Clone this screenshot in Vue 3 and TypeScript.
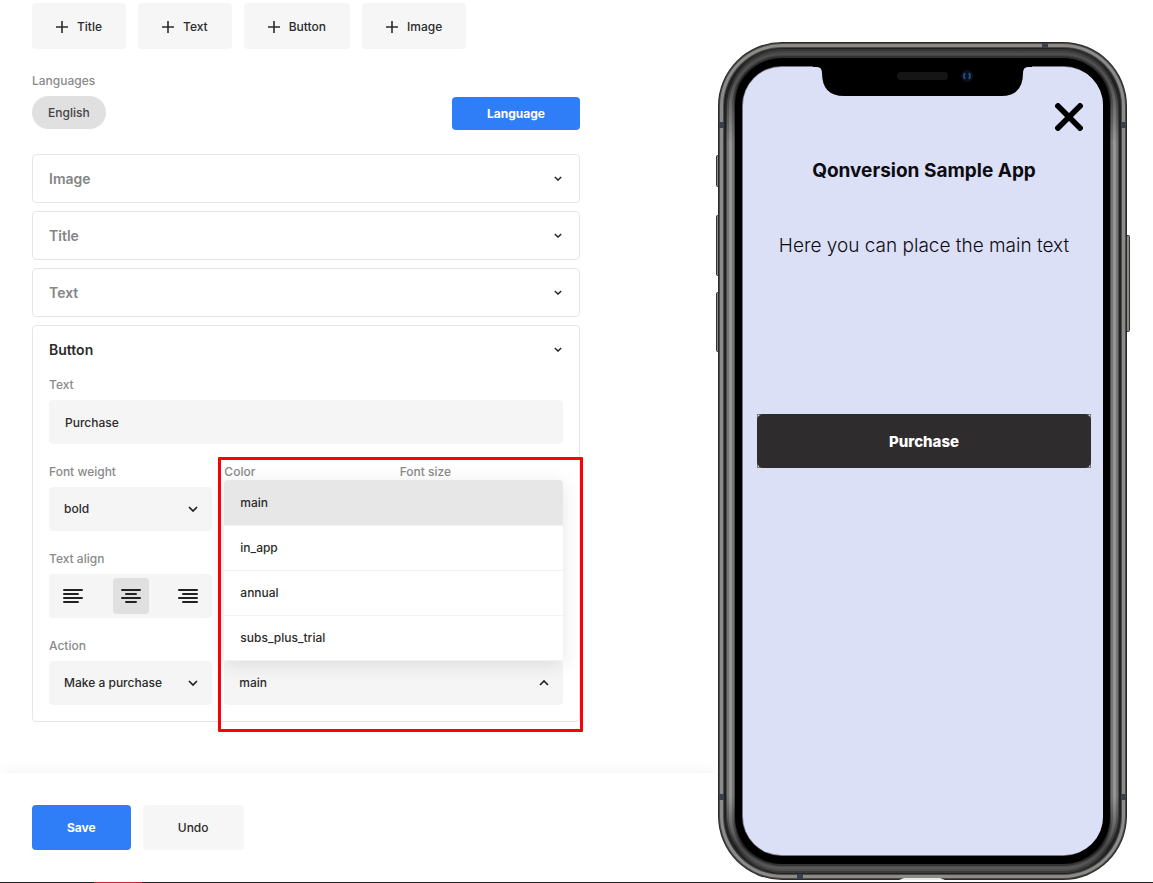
<script setup lang="ts">
import { ref } from 'vue'

const blocks = ['Title', 'Text', 'Button', 'Image']
const collapsed = ['Image', 'Title', 'Text']
const products = ['main', 'in_app', 'annual', 'subs_plus_trial']

const product = ref('main')
const buttonText = ref('Purchase')
const fontWeight = ref('bold')
const action = ref('Make a purchase')
const align = ref('center')

const alignments = [
  { name: 'left', path: 'M1 1h18M1 5h14M1 9h18M1 13h14' },
  { name: 'center', path: 'M1 1h18M5 5h10M1 9h18M5 13h10' },
  { name: 'right', path: 'M1 1h18M5 5h14M1 9h18M5 13h14' },
]

// Nested outlines of the handset frame: side inset, top inset, corner radius, fill.
const frame = [
  { x: 0, y: 0, r: 64, fill: '#2a2a2a' },
  { x: 1, y: 1, r: 63, fill: '#4b4a49' },
  { x: 2, y: 2, r: 62, fill: '#8d8b89' },
  { x: 5, y: 5, r: 59, fill: '#4a4a49' },
  { x: 6, y: 6, r: 58, fill: '#222' },
  { x: 8, y: 7, r: 56, fill: 'url(#bezel-dark)' },
  { x: 9, y: 9, r: 55, fill: 'url(#bezel-mid)' },
  { x: 11, y: 11, r: 53, fill: 'url(#bezel-light)' },
  { x: 14, y: 13, r: 50, fill: 'url(#bezel-mid)' },
  { x: 16, y: 14, r: 48, fill: 'url(#bezel-dark)' },
  { x: 17, y: 16, r: 47, fill: '#000' },
  { x: 24, y: 24, r: 40, fill: '#77777f' },
]
</script>

<template>
  <div class="page">
    <main class="editor">
      <div class="content">
        <div class="adders">
          <button v-for="b in blocks" :key="b" type="button" class="btn add">
            <svg width="12" height="12" viewBox="0 0 12 12"><path d="M6 0v12M0 6h12" /></svg>
            {{ b }}
          </button>
        </div>

        <p class="caption">Languages</p>
        <div class="languages">
          <button type="button" class="pill">English</button>
          <button type="button" class="btn primary language">Language</button>
        </div>

        <div class="cards">
          <section v-for="c in collapsed" :key="c" class="card">
            <button type="button" class="card-head">
              {{ c }}
              <svg class="chevron small" viewBox="0 0 10 6"><path d="M1 1l4 4 4-4" /></svg>
            </button>
          </section>

          <section class="card open">
            <button type="button" class="card-head">
              Button
              <svg class="chevron small" viewBox="0 0 10 6"><path d="M1 1l4 4 4-4" /></svg>
            </button>
            <div class="fields">
              <div class="field full">
                <label for="text">Text</label>
                <input id="text" v-model="buttonText" class="control" type="text" />
              </div>
              <div class="field">
                <label for="weight">Font weight</label>
                <div class="select">
                  <select id="weight" v-model="fontWeight" class="control"><option>bold</option></select>
                  <svg class="chevron" viewBox="0 0 10 6"><path d="M1 1l4 4 4-4" /></svg>
                </div>
              </div>
              <div class="field">
                <label for="color">Color</label>
                <input id="color" class="control" type="text" />
              </div>
              <div class="field">
                <label for="size">Font size</label>
                <input id="size" class="control" type="text" />
              </div>
              <div class="field first">
                <span class="label">Text align</span>
                <div class="aligns">
                  <button
                    v-for="a in alignments"
                    :key="a.name"
                    type="button"
                    :class="{ active: align === a.name }"
                    :aria-label="a.name"
                    @click="align = a.name"
                  >
                    <svg width="20" height="14" viewBox="0 0 20 14"><path :d="a.path" /></svg>
                  </button>
                </div>
              </div>
              <div class="field first">
                <label for="action">Action</label>
                <div class="select">
                  <select id="action" v-model="action" class="control"><option>Make a purchase</option></select>
                  <svg class="chevron" viewBox="0 0 10 6"><path d="M1 1l4 4 4-4" /></svg>
                </div>
              </div>
              <div class="field product">
                <button type="button" class="control trigger" aria-haspopup="listbox" aria-expanded="true">
                  {{ product }}
                  <svg class="chevron" viewBox="0 0 10 6"><path d="M1 5l4-4 4 4" /></svg>
                </button>
                <ul class="menu" role="listbox">
                  <li
                    v-for="p in products"
                    :key="p"
                    role="option"
                    :aria-selected="p === product"
                    :class="{ selected: p === product }"
                    @click="product = p"
                  >
                    {{ p }}
                  </li>
                </ul>
                <div class="highlight"></div>
              </div>
            </div>
          </section>
        </div>
      </div>

      <footer class="actions">
        <button type="button" class="btn primary">Save</button>
        <button type="button" class="btn">Undo</button>
      </footer>
    </main>

    <aside class="preview">
      <div class="phone">
        <svg class="handset" viewBox="0 0 416 840">
          <defs>
            <linearGradient id="bezel-dark" x1="0" y1="0" x2="0" y2="838" gradientUnits="userSpaceOnUse">
              <stop offset="0" stop-color="#3c3c3c" />
              <stop offset=".05" stop-color="#1c1c1c" />
              <stop offset=".12" stop-color="#4c4c4c" />
              <stop offset=".9" stop-color="#4c4c4c" />
              <stop offset=".96" stop-color="#1c1c1c" />
              <stop offset="1" stop-color="#444" />
            </linearGradient>
            <linearGradient id="bezel-mid" x1="0" y1="0" x2="0" y2="838" gradientUnits="userSpaceOnUse">
              <stop offset="0" stop-color="#484848" />
              <stop offset=".05" stop-color="#383838" />
              <stop offset=".12" stop-color="#757575" />
              <stop offset=".9" stop-color="#757575" />
              <stop offset=".96" stop-color="#333" />
              <stop offset="1" stop-color="#5c5c5c" />
            </linearGradient>
            <linearGradient id="bezel-light" x1="0" y1="0" x2="0" y2="838" gradientUnits="userSpaceOnUse">
              <stop offset="0" stop-color="#4c4c4c" />
              <stop offset=".05" stop-color="#555" />
              <stop offset=".12" stop-color="#949494" />
              <stop offset=".9" stop-color="#949494" />
              <stop offset=".96" stop-color="#484848" />
              <stop offset="1" stop-color="#646464" />
            </linearGradient>
          </defs>
          <g fill="#8b8987" stroke="#333">
            <rect x="1.500" y="113.500" width="6" height="31" rx="1" />
            <rect x="1.500" y="173.500" width="6" height="60" rx="1" />
            <rect x="1.500" y="250.500" width="6" height="59" rx="1" />
            <rect x="408.500" y="193.500" width="6" height="96" rx="1" />
          </g>
          <rect
            v-for="(f, i) in frame"
            :key="i"
            :x="3 + f.x"
            :y="f.y"
            :width="409 - 2 * f.x"
            :height="838 - 2 * f.y"
            :rx="f.r"
            :fill="f.fill"
          />
          <g fill="#3b4048">
            <rect x="4" y="80" width="5" height="6" />
            <rect x="406" y="80" width="5" height="6" />
            <rect x="4" y="752" width="5" height="6" />
            <rect x="406" y="752" width="5" height="6" />
            <rect x="327" y="1" width="6" height="5" />
            <rect x="82" y="832" width="6" height="5" />
          </g>
          <path d="M184 838l5-2h36l5 2z" fill="#e8e8e8" />
          <rect x="28" y="25" width="360" height="788" rx="38" fill="#dce0f7" />
          <path
            d="M98 24v1h4q5 0 5 6q0 23 22 23h157q22 0 22-23q0-6 5-6h4v-1z"
            fill="#000"
          />
          <rect x="182" y="30" width="51" height="8" rx="4" fill="#151515" />
          <circle cx="252" cy="34" r="6" fill="#0b0f18" />
          <path d="M250 31q-2 3 0 6M254 31q2 3 0 6" fill="none" stroke="#1d4a82" stroke-width="2" />
        </svg>
        <div class="screen">
          <button type="button" class="close" aria-label="Close">
            <svg width="28" height="28" viewBox="0 0 28 28"><path d="M3 3l22 22M25 3L3 25" /></svg>
          </button>
          <h1>Qonversion Sample App</h1>
          <p>Here you can place the main text</p>
          <div class="purchase-frame"><button type="button" class="purchase">{{ buttonText }}</button></div>
        </div>
      </div>
    </aside>
    <div class="strip"></div>
  </div>
</template>

<style>
body {
  background: #fff;
}
</style>

<style scoped>
.page {
  display: grid;
  grid-template-columns: minmax(0, 715fr) minmax(416px, 438fr);
  grid-template-rows: 1fr auto;
  min-height: 100vh;
  font-family: Inter, 'Liberation Sans', sans-serif;
  font-optical-sizing: none;
  font-size: 12px;
  line-height: 16px;
  font-weight: 500;
  color: #2b2b2b;
}
.page *,
.page {
  box-sizing: border-box;
}
button,
input,
select {
  font: inherit;
  font-optical-sizing: none;
  color: inherit;
  border: 0;
  margin: 0;
  cursor: pointer;
}
.editor {
  display: flex;
  flex-direction: column;
}
.content {
  max-width: 612px;
  padding: 3px 32px 48px;
}
.adders {
  display: flex;
  gap: 12px;
}
.btn {
  display: flex;
  align-items: center;
  justify-content: center;
  height: 45px;
  padding: 0 35px;
  border-radius: 4px;
  background: #f6f6f6;
  font-weight: 550;
}
.btn.add {
  height: 46px;
  padding: 1px 24px 0;
  gap: 9px;
}
.add path {
  stroke: #2b2b2b;
  stroke-width: 1.6;
}
.btn.primary {
  background: #307df8;
  color: #fff;
  font-weight: 700;
}
.caption {
  margin: 24px 0 7px;
  color: #8a8a8a;
}
.languages {
  display: flex;
  justify-content: space-between;
  align-items: flex-start;
  margin-bottom: 24px;
}
.pill {
  height: 33px;
  padding: 0 16px;
  border-radius: 17px;
  background: #e0e0e0;
  color: #444;
}
.btn.language {
  height: 33px;
  margin-top: 1px;
}
.cards {
  display: flex;
  flex-direction: column;
  gap: 8px;
}
.card {
  border: 1px solid #e6e6e6;
  border-radius: 4px;
}
.card-head {
  display: flex;
  align-items: center;
  justify-content: space-between;
  width: 100%;
  height: 47px;
  padding: 0 16px;
  background: none;
  font-size: 14px;
  font-weight: 600;
  color: #858585;
}
.open .card-head {
  color: #2b2b2b;
}
.chevron {
  width: 10px;
  height: 6px;
  fill: none;
  stroke: #222;
  stroke-width: 1.7;
}
.chevron.small {
  width: 8px;
  height: 5px;
  margin-right: 1px;
}
.fields {
  display: grid;
  grid-template-columns: repeat(3, minmax(0, 1fr));
  gap: 20px 12px;
  padding: 4px 16px 16px;
}
.field {
  display: flex;
  flex-direction: column;
  justify-content: flex-end;
  gap: 7px;
}
.full {
  grid-column: 1 / -1;
}
.first {
  grid-column: 1;
}
label,
.label {
  color: #8a8a8a;
}
.control {
  width: 100%;
  height: 44px;
  padding: 0 16px;
  border-radius: 4px;
  background: #f5f5f5;
  font-weight: 550;
  outline: 0;
}
.select {
  display: grid;
  align-items: center;
}
.select > * {
  grid-area: 1 / 1;
}
.select .control {
  appearance: none;
  padding: 0 15px;
}
.select .chevron {
  justify-self: end;
  margin-right: 14px;
  pointer-events: none;
}
.aligns {
  display: flex;
  justify-content: space-between;
  padding: 4px 6px;
  border-radius: 4px;
  background: #f5f5f5;
}
.aligns button {
  display: grid;
  place-items: center;
  width: 36px;
  height: 36px;
  padding: 0;
  border-radius: 4px;
  background: none;
}
.aligns .active {
  background: #e0e0e0;
}
.aligns path {
  stroke: #222;
  stroke-width: 2;
  stroke-linecap: round;
}
.product {
  position: relative;
  grid-column: 2 / -1;
}
.trigger {
  display: flex;
  align-items: center;
  justify-content: space-between;
  padding: 0 14px 0 15px;
}
.menu {
  position: absolute;
  left: 0;
  right: 0;
  bottom: 44px;
  margin: 0;
  padding: 0;
  list-style: none;
  background: #fff;
  border-radius: 4px 4px 0 0;
  box-shadow: 0 4px 20px rgba(0, 0, 0, 0.1);
  font-weight: 550;
}
.menu li {
  height: 45px;
  padding: 14px 16px;
  border-bottom: 1px solid #f2f2f2;
  cursor: pointer;
}
.menu li:first-child {
  height: 46px;
  padding-top: 15px;
}
.menu .selected {
  background: #e7e7e7;
  border-radius: 4px 4px 0 0;
}
.highlight {
  position: absolute;
  inset: -181px -20px -27px -6px;
  border: 3px solid #fb0007;
  border-radius: 1px;
  pointer-events: none;
}
.actions {
  display: flex;
  gap: 12px;
  margin-top: auto;
  padding: 32px;
  background: #fff;
  box-shadow: 0 0 16px rgba(0, 0, 0, 0.06);
  clip-path: inset(-16px 0 0 0);
}
.preview {
  position: relative;
  padding-top: 42px;
}
.phone {
  position: relative;
  width: 416px;
  height: 840px;
}
.handset {
  position: absolute;
  inset: 0;
  width: 100%;
  height: 100%;
}
.screen {
  position: relative;
  display: flex;
  flex-direction: column;
  padding: 61px 40px 0 42px;
  color: #0c0c10;
  text-align: center;
}
.close {
  align-self: flex-end;
  margin-right: 8px;
  width: 28px;
  height: 28px;
  padding: 0;
  background: none;
}
.close svg {
  display: block;
}
.close path {
  stroke: #000;
  stroke-width: 5.6;
  stroke-linecap: square;
}
h1 {
  margin: 28px 0 0;
  font-size: 19px;
  line-height: 24px;
  font-weight: 650;
}
.screen p {
  margin: 51px 0 0;
  font-size: 19px;
  line-height: 24px;
  font-weight: 300;
}
.purchase-frame {
  margin-top: 156px;
  border: 1px solid #77777c;
  background: #fff;
}
.purchase {
  display: block;
  width: calc(100% + 2px);
  height: 54px;
  margin: -1px;
  padding: 2px 0 0;
  border-radius: 6px;
  background: #2f2c2d;
  color: #fff;
  font-size: 15px;
  font-weight: 800;
}
.strip {
  grid-column: 1 / -1;
  height: 1px;
  background: linear-gradient(90deg, #1d1d1d 94px, #c4282a 94px 142px, #1d1d1d 142px);
}
</style>
